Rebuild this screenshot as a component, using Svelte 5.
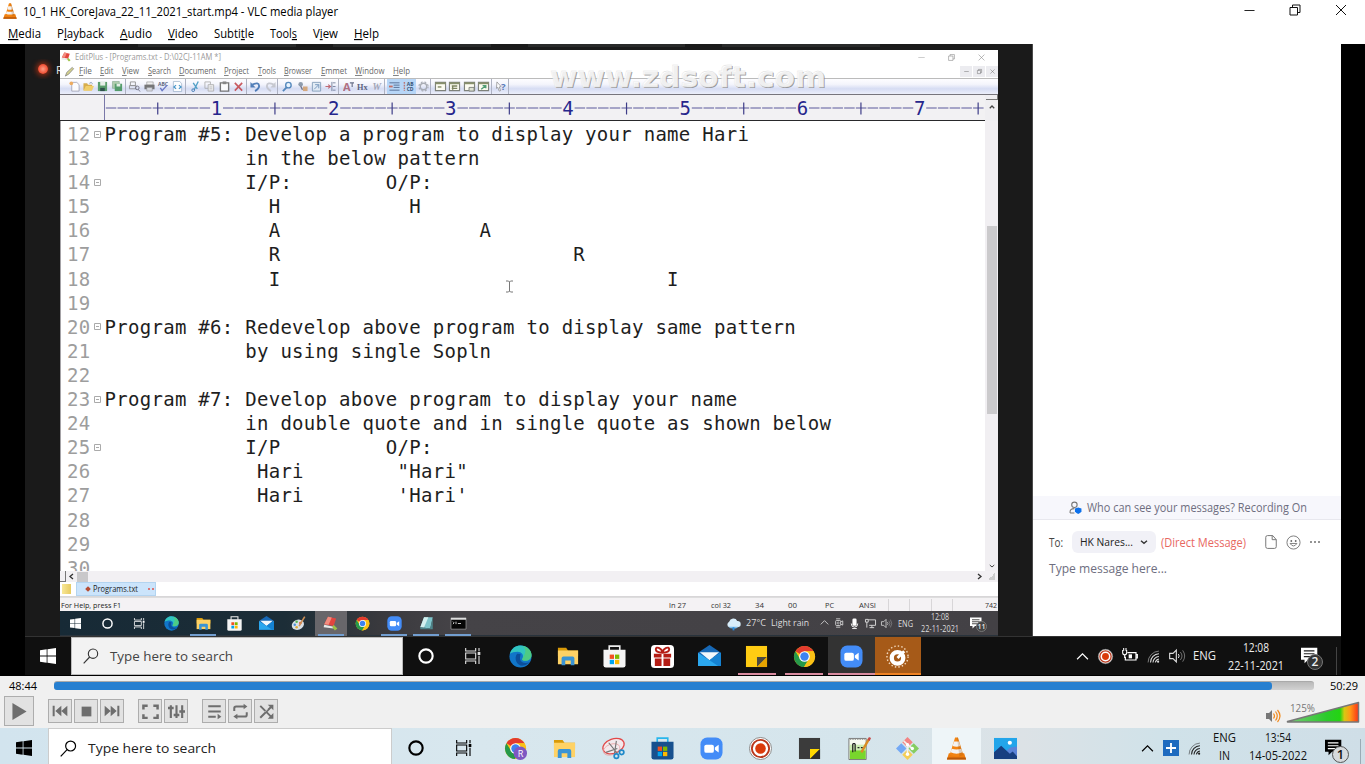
<script>
  const menus = [['', 'M', 'edia', 33], ['P', 'l', 'ayback', 47], ['', 'A', 'udio', 32], ['', 'V', 'ideo', 30], ['Subti', 't', 'le', 40], ['Tool', 's', '', 27], ['V', 'i', 'ew', 25], ['', 'H', 'elp', 25]];
  const editMenus = [['F', 'ile', 13], ['E', 'dit', 13.5], ['V', 'iew', 17], ['S', 'earch', 23], ['D', 'ocument', 37], ['P', 'roject', 25], ['T', 'ools', 18], ['B', 'rowser', 28], ['E', 'mmet', 26], ['W', 'indow', 29.5], ['H', 'elp', 17]];
  const lines = [
    'Program #5: Develop a program to display your name Hari',
    '            in the below pattern',
    '            I/P:        O/P:',
    '              H           H',
    '              A                 A',
    '              R                         R',
    '              I                                 I',
    '',
    'Program #6: Redevelop above program to display same pattern',
    '            by using single Sopln',
    '',
    'Program #7: Develop above program to display your name',
    '            in double quote and in single quote as shown below',
    '            I/P         O/P:',
    '             Hari        "Hari"',
    "             Hari        'Hari'",
    '', '', ''
  ];
  const folds = [0, 2, 8, 11, 13];
  const CW = 11.72;
  const ruler = Array.from({ length: 75 }, (_, i) => i + 1);
  const tools = [['new', 'open', 'save', 'saveall'], ['preview', 'print', 'spell', 'code'], ['cut', 'copy', 'paste', 'del'], ['undo', 'redo'], ['find', 'replace', 'goto', 'marker'], ['font', 'hx', 'wrap'], ['indent', 'nums', 'gear'], ['win1', 'win2', 'win3', 'win4'], ['help']];
  const innerApps = ['edge', 'folder', 'store', 'mail', 'paint', 'editplus', 'chrome', 'zoom', 'notepad', 'cmd'];
  const midApps = ['edge', 'folder', 'store', 'gift', 'mail', 'sticky', 'chrome', 'zoom', 'dial'];
  const apps = ['chromeR', 'folder', 'snip', 'store2', 'zoom', 'rec', 'sticky2', 'npp', 'git', 'cone', 'photos'];
  const status = [['ln 27', 547, 17], ['col 32', 25, 20], ['34', 24, 9], ['00', 24, 9], ['PC', 28, 9], ['ANSI', 25, 17]];
</script>

{#snippet t(s, w, size, fill = '#111', weight = 400)}
  <svg class="t" width={w} height={Math.ceil(size * 1.4)}><text x="0" y={size * 1.08} font-size={size} {fill} font-weight={weight} textLength={w} lengthAdjust="spacingAndGlyphs">{s}</text></svg>
{/snippet}

{#snippet mn(a, b, c, w, size, fill)}
  <svg class="t" width={w} height={Math.ceil(size * 1.5)}><text x="0" y={size * 1.08} font-size={size} {fill} textLength={w} lengthAdjust="spacingAndGlyphs">{a}<tspan text-decoration="underline">{b}</tspan>{c}</text></svg>
{/snippet}

{#snippet chromeArt()}
  <circle cx="12" cy="12" r="11" fill="#fbc116" />
  <path d="M12 12 2.500 6.500A11 11 0 0 1 21.500 6.500H12z" fill="#e33b2e" />
  <path d="M2.500 6.500A11 11 0 0 0 11.500 23L16.500 14.500 12 12 7.500 14.500z" fill="#26994a" />
  <path d="M21.500 6.500H12L16.800 14.500 11.500 23A11 11 0 0 0 21.500 6.500z" fill="#fbc116" />
  <circle cx="12" cy="12" r="5.600" fill="#fff" /><circle cx="12" cy="12" r="4.400" fill="#3d82f0" />
{/snippet}

{#snippet icon(name, size, color = '#fff')}
  <svg class="i" width={size} height={size} viewBox="0 0 24 24" fill="none">
    {#if name === 'cone'}
      <path d="M4 17h16l2 6.500H2z" fill="#ee7d0d" /><path d="M2.500 21.500h19l.5 2H2z" fill="#b9590a" /><path d="M10.500 .5h3L19 18.500q-7 3.500-14 0z" fill="#f28413" /><path d="M9.300 4.800h5.400l1.300 4.500q-4 1.500-8 0zM7 12.300q5 1.700 10 0l1.200 3.700q-6.200 2.800-12.400 0z" fill="#f3f3f3" /><path d="M13.500 .5 19 18.500q-2 1.200-4 1.500L12.500 .5z" fill="#8a4a12" opacity=".22" />
    {:else if name === 'win'}
      <path d="M0 3.300 10 2v9.400H0zM11.200 1.800 24 0v11.400H11.200zM0 12.600h10V22L0 20.700zM11.200 12.600H24V24l-12.800-1.800z" fill={color} />
    {:else if name === 'search'}
      <circle cx="15" cy="8.500" r="7" stroke={color} stroke-width="1.700" /><path d="M10 13.500 1 23" stroke={color} stroke-width="1.700" />
    {:else if name === 'cortana'}
      <circle cx="12" cy="12" r="10" stroke={color} stroke-width="3.200" />
    {:else if name === 'task'}
      <path d="M1 0v4.500h15V0M1 24v-4.500h15V24M1 7.500h15v9H1zM21 0v5M21 11.500V24" stroke={color} stroke-width="1.700" /><path d="M19 6h4v4.500h-4z" fill={color} />
    {:else if name === 'edge'}
      <circle cx="12" cy="12" r="11.500" fill="#1176c9" /><path d="M1 9C3 2.500 8 .4 12 .5c7 0 11.500 5 11.500 10 0 4-3 6-6.500 6-2.500 0-4-1-3-2.500 2-3.500-1-7-5-7-3.500 0-6.500 1-8 2z" fill="#31c5c0" /><path d="M14 1c6 1 9.500 5 9.500 9.500 0 4-3 6-6.500 6-2.500 0-4-1-3-2.500C17 10 19 4 14 1z" fill="#57cc70" opacity=".75" /><path d="M8.500 9c-4 5 0 13 6 12.500 3-.1 5-1.500 6.500-3.500-4 1.500-9 .5-9.500-3.500-.2-2 .5-3.500.5-5z" fill="#0b4f9c" />
    {:else if name === 'folder'}
      <path d="M1 3h9l2 3h11v6H1z" fill="#d99a08" /><path d="M1 6h22v15H1z" fill="#ffd265" /><path d="M5 22v-7.500q0-2 2-2h10q2 0 2 2V22h-4v-5H9v5z" fill="#3b94d4" />
    {:else if name === 'store' || name === 'store2'}
      {@const d = name === 'store2'}
      <path d="M6.500 6V1.200h11V6" stroke={d ? '#28b6ec' : '#eee'} stroke-width="1.700" /><path d="M.5 5h23v16q0 2.500-2.500 2.500H3Q.5 23.500.5 21z" fill={d ? '#17508e' : '#f5f5f5'} /><path d="M7 10h4.500v4.500H7z" fill="#f25022" /><path d="M12.500 10H17v4.500h-4.500z" fill="#7fba00" /><path d="M7 15.500h4.500V20H7z" fill="#00a4ef" /><path d="M12.500 15.500H17V20h-4.500z" fill="#ffb900" />
    {:else if name === 'mail'}
      <path d="M0 8 12 0l12 8v14H0z" fill="#1768b5" /><path d="M2 7.500h20L12 16z" fill="#f2f8fc" /><path d="M0 8l12 8 12-8v14H0z" fill="#2ba7ee" /><path d="M24 8 12 16l9 6h3z" fill="#1582d2" />
    {:else if name === 'gift'}
      <rect width="24" height="24" rx="4" fill="#fff" /><path d="M3 9h8v4H3zM13 9h8v4h-8zM4 14h7v8H4zM13 14h7v8h-7z" fill="#b51d15" /><path d="M12 8C9 8 5 7 5 4.500 5 1 11 3 12 8c1-5 7-7 7-3.500C19 7 15 8 12 8z" stroke="#b51d15" stroke-width="2" />
    {:else if name === 'sticky' || name === 'sticky2'}
      {@const d = name === 'sticky2'}
      <path d="M1 1h22v22H1z" fill={d ? '#3b3b3b' : '#ffcc13'} /><path d="M12.500 23V12.500H23z" fill={d ? '#ffd900' : '#4d4a40'} /><path d="M23 12.500V23H12.500z" fill={d ? '#2d2d2d' : '#e7a400'} />
    {:else if name === 'chrome'}
      {@render chromeArt()}
    {:else if name === 'chromeR'}
      {@render chromeArt()}<circle cx="17" cy="17" r="7" fill="#7e57c2" /><text x="14.300" y="20.500" font-size="9.500" fill="#fff">R</text>
    {:else if name === 'zoom'}
      <rect x=".5" y=".5" width="23" height="23" rx="7" fill="#438cf7" /><rect x="4.500" y="8" width="10" height="8.500" rx="2" fill="#fff" /><path d="m15.500 11 4-2.800v8l-4-2.800z" fill="#fff" />
    {:else if name === 'dial'}
      <circle cx="12" cy="12" r="11" stroke="#f3d9bd" stroke-width="1.500" stroke-dasharray="1.500 2.200" /><circle cx="12" cy="13.500" r="6" stroke="#fff" stroke-width="4.500" /><path d="m12 13.500 7-7" stroke="#fff" stroke-width="3" />
    {:else if name === 'snip'}
      <ellipse cx="12" cy="9.500" rx="11.500" ry="7.500" transform="rotate(-20 12 9.500)" fill="#f3e9ec" stroke="#e24848" stroke-width="1.300" /><ellipse cx="10" cy="13" rx="9" ry="5.500" transform="rotate(-20 10 13)" stroke="#e99a9a" stroke-width=".7" /><path d="m7 6 9 11M15 4l-2 13M4 16l12-4" stroke="#777" stroke-width="1.200" /><circle cx="15" cy="20" r="2.300" stroke="#1e89c9" stroke-width="1.800" /><circle cx="20.500" cy="16" r="2.300" stroke="#1e89c9" stroke-width="1.800" />
    {:else if name === 'rec'}
      <circle cx="12" cy="12" r="11.500" fill="#fff" stroke="#888" stroke-width="1" /><circle cx="12" cy="12" r="9" stroke="#b9371b" stroke-width="2" /><circle cx="12" cy="12" r="5.500" fill="#da3b0b" />
    {:else if name === 'npp'}
      <path d="M2 1.500h18v22H2z" fill="#f7fbf2" stroke="#777" /><path d="M3 9h16.500v14H3z" fill="#78d62d" /><path d="M3 8h16.500v6H3z" fill="#cdeeb4" /><path d="M3 2h16" stroke="#888" stroke-width="1.500" stroke-dasharray="1.500 1" /><path d="M6 7v9M8.500 7v8M6 7h2.500M11 11h2M14.500 11h2" stroke="#222" stroke-width="1.300" /><path d="m23 2-8 14" stroke="#d98d25" stroke-width="2.500" /><path d="m24 .5-1.500 3" stroke="#c54848" stroke-width="2.500" />
    {:else if name === 'git'}
      <path d="m12 0 5.500 5.500L12 11 6.500 5.500z" fill="#f38484" /><path d="m18.500 6.500 5.500 5.500-5.500 5.500L13 12z" fill="#86cd61" /><path d="m5.500 6.500L0 12l5.500 5.500L11 12z" fill="#74a9f5" /><path d="m12 13 5.500 5.500L12 24l-5.500-5.500z" fill="#f5ce57" /><path d="m8 4 4 4v11M12 8l5 4" stroke="#f1f1ed" stroke-width="1.700" /><circle cx="12" cy="18" r="1.800" fill="#fff" /><circle cx="17" cy="12" r="1.800" fill="#fff" /><circle cx="12" cy="8" r="1.800" fill="#fff" />
    {:else if name === 'photos'}
      <path d="M0 1h24v22H0z" fill="#22a5ea" /><path d="M24 10v13h-8l-4-8 5-4z" fill="#5a83d8" /><path d="m0 16 7.500-7 9 8.500 3-2.500 4.500 5v3H0z" fill="#173f80" /><circle cx="16.500" cy="6" r="2.200" fill="#fff" />
    {:else if name === 'paint'}
      <ellipse cx="11" cy="14" rx="10" ry="8" fill="#d8dfe5" transform="rotate(-20 11 14)" /><circle cx="6" cy="14" r="2" fill="#4b90d8" /><circle cx="9" cy="9" r="2" fill="#59b655" /><circle cx="15" cy="11" r="2" fill="#d84f3b" /><circle cx="9" cy="18" r="2" fill="#e0ac3a" /><path d="m22 1-9 15" stroke="#cf9056" stroke-width="2.500" />
    {:else if name === 'editplus'}
      <path d="M8 1 21 4l-4 12L2 13z" fill="#e3453f" /><path d="m8 1 6 1.500L9 14 2 13z" fill="#f28d80" /><path d="M2 14l15 3v3L1 18z" fill="#e8eaea" /><path d="m17 14 6 6-4 3-4-5z" fill="#9dc144" />
    {:else if name === 'notepad'}
      <path d="M8 2h14l-4 18-16-2z" fill="#7fc5cb" /><path d="m8 2 7 0-7 16.500-6-.5z" fill="#d4f0ef" /><path d="m2 18 16 2 4-18v19H2z" fill="#4d858b" />
    {:else if name === 'cmd'}
      <path d="M0 3h24v18H0z" fill="#060606" stroke="#aaa" /><path d="M0 3h24v3H0z" fill="#ddd" /><path d="m3 9 2 2-2 2M8 9v4M11 12h5" stroke="#eee" stroke-width="1.300" />
    {:else if name === 'chev'}
      <path d="m2 17 10-10 10 10" stroke={color} stroke-width="2.200" />
    {:else if name === 'chevb'}
      <path d="m3 17 9-9 9 9" stroke={color} stroke-width="5" />
    {:else if name === 'chevd'}
      <path d="m3 8 9 8 9-8" stroke={color} stroke-width="4" />
    {:else if name === 'wifi'}
      <path d="M2 23A21 21 0 0 1 22 2" stroke={color} stroke-width="1.500" opacity=".65" /><path d="M6.500 23A16 16 0 0 1 22 7M11 23a11.500 11.500 0 0 1 11-11M15.500 23q1-5.500 6.500-6.500" stroke={color} stroke-width="2" /><circle cx="20.500" cy="21.500" r="2" fill={color} />
    {:else if name === 'vol'}
      <path d="M1 8h5l5-5v18l-5-5H1z" stroke={color} stroke-width="1.700" /><path d="M14 9q2.500 3 0 6" stroke={color} stroke-width="1.500" /><path d="M17 6q5 6 0 12M20.500 3.500q6 8.500 0 17" stroke={color} stroke-width="1.300" opacity=".55" />
    {:else if name === 'batt'}
      <path d="M8 7h13v11H5v-5M21 10h2v5h-2" stroke={color} stroke-width="1.800" /><path d="M10 9.500h5v6h-5z" fill={color} /><path d="M1 3v4q0 3 3 3t3-3V3M2.500 0v4M6 0v4M4 10v5" stroke={color} stroke-width="1.600" />
    {:else if name === 'cam'}
      <rect x="4" y="6" width="12" height="12" rx="2" stroke={color} stroke-width="2" /><circle cx="10" cy="12" r="2.500" stroke={color} stroke-width="1.500" /><path d="M16 9l5-2v10l-5-2M5 2h10M5 22h10" stroke={color} stroke-width="2" />
    {:else if name === 'mic'}
      <rect x="7.500" y="1" width="9" height="16" rx="3" fill={color} /><path d="M5 12q0 8 7 8t7-8M7 23h10" stroke={color} stroke-width="2" />
    {:else if name === 'net'}
      <path d="M7 4h16v12H9M15 16v5M10 21h10M1 3h6v6H1zM4 9v12" stroke={color} stroke-width="2" />
    {:else if name === 'cloud'}
      <path d="M5 18a5 5 0 0 1 0-9 7 7 0 0 1 13-1 5 5 0 0 1 1 10z" fill="#d8edfa" /><path d="M4 17h15q-1 3-7 3t-8-3z" fill="#7bbbe8" /><path d="M12 18v5" stroke="#2889db" stroke-width="3" />
    {:else if name === 'notif'}
      <path d="M0 1h23v17H10l-5 5v-5H0z" fill={color} /><path d="M4 5.500h15M4 9.500h15M4 13.500h15" stroke={color === '#000' ? '#fff' : '#222'} stroke-width="1.600" />
    {:else if name === 'plus'}
      <path d="M0 0h24v24H0z" fill="#1e6bbf" /><path d="M12 4.500v15M4.500 12h15" stroke="#fff" stroke-width="2.800" />
    {:else if name === 'min'}
      <path d="M1 12h22" stroke={color} stroke-width="2" />
    {:else if name === 'restore'}
      <path d="M2 7h15v15H2zM7 7V2h15v15h-5" stroke={color} stroke-width="2" />
    {:else if name === 'close'}
      <path d="m2 2 20 20M22 2 2 22" stroke={color} stroke-width="2" />
    {:else if name === 'play'}
      <path d="M2 0 22 12 2 24z" fill={color} />
    {:else if name === 'prev'}
      <path d="M1 4h3v16H1zM14 4v16L5 12zM23 4v16l-9-8z" fill={color} />
    {:else if name === 'next'}
      <path d="M20 4h3v16h-3zM10 4v16l9-8zM1 4v16l9-8z" fill={color} />
    {:else if name === 'stop'}
      <path d="M3 3h18v18H3z" fill={color} />
    {:else if name === 'full'}
      <path d="M2 9V4h6M16 4h6v5M22 16v5h-6M8 21H2v-5" stroke={color} stroke-width="3.500" />
    {:else if name === 'eq'}
      <path d="M4 3v18M12 3v18M20 3v18" stroke={color} stroke-width="3" /><path d="M0 7h8M8 17h8M16 12h8" stroke={color} stroke-width="3.500" />
    {:else if name === 'list'}
      <path d="M2 3.500h20M2 12h20M2 20.500h12" stroke={color} stroke-width="3.300" /><path d="m17 15.500 6 5-6 4z" fill={color} />
    {:else if name === 'loop'}
      <path d="M2 11V7q0-3 3-3h13M22 13v4q0 3-3 3H6" stroke={color} stroke-width="3.200" /><path d="m17-.5 6 4.500-6 4.500zM7 15.500.500 20 7 24.500z" fill={color} />
    {:else if name === 'shuffle'}
      <path d="m2 3 18 18M2 22 20 4" stroke={color} stroke-width="3.200" /><path d="M14 1h9v9zM14 23.500h9v-9z" fill={color} /><path d="m9 13 5-5" stroke="#e2e2e2" stroke-width="1" />
    {:else if name === 'person'}
      <circle cx="10" cy="7" r="5" stroke="#777" stroke-width="2" /><path d="M2 22q-1-8 8-8M2 22h8" stroke="#777" stroke-width="2" /><path d="m17 12 6 2v5q-1 3-6 5-5-2-6-5v-5z" fill="#0e71eb" />
    {:else if name === 'file'}
      <path d="M6 1h9l6 7v12q0 3-3 3H6q-3 0-3-3V4q0-3 3-3zM14 1v7h7" stroke="#777" stroke-width="1.700" />
    {:else if name === 'smile'}
      <circle cx="12" cy="12" r="10.500" stroke="#777" stroke-width="1.500" /><circle cx="8.500" cy="9.500" r="1.500" fill="#666" /><circle cx="15.500" cy="9.500" r="1.500" fill="#666" /><path d="M6.500 13.500q5.500 8 11 0z" stroke="#777" stroke-width="1.500" />
    {:else if name === 'dots'}
      <circle cx="4" cy="12" r="1.900" fill="#666" /><circle cx="12" cy="12" r="1.900" fill="#666" /><circle cx="20" cy="12" r="1.900" fill="#666" />
    {:else if name === 'pen'}
      <path d="m3 22 3-8L18 3l3 3L10 18z" fill="#d5d28c" stroke="#777" stroke-width="1.500" />
    {:else if name === 'new'}
      <path d="M6 3h11l5 5v14H6z" fill="#fff" stroke="#889" stroke-width="1.500" /><circle cx="5" cy="5" r="4" fill="#eda24b" />
    {:else if name === 'open'}
      <path d="M1 5h8l2 3h9v12H1z" fill="#d5a536" /><path d="M6 11h18l-5 10H1z" fill="#f4cc57" /><path d="M14 5q4-4 7 1" stroke="#6b87a8" stroke-width="2" />
    {:else if name === 'save'}
      <path d="M2 2h20v20H2z" fill="#48945a" /><path d="M7 2h11v8H7z" fill="#e4eee6" /><path d="M7 15h10v7H7z" fill="#173f35" />
    {:else if name === 'saveall'}
      <path d="M1 1h15v15H1z" fill="#a7c8a4" stroke="#5b8b67" /><path d="M6 6h16v16H6z" fill="#42935a" /><path d="M10 6h8v6h-8z" fill="#e1eee3" />
    {:else if name === 'preview'}
      <path d="M3 2h11v8H3zM1 10h14v7H1z" stroke="#888" stroke-width="2" /><circle cx="18" cy="15" r="4" stroke="#667" stroke-width="2" /><path d="m20 18 4 5" stroke="#667" stroke-width="2" />
    {:else if name === 'print'}
      <path d="M6 2h14v7H6z" fill="#eee" stroke="#666" /><path d="M1 8h22v10H1z" fill="#666" /><path d="M6 14h12v8H6z" fill="#d5d7dc" stroke="#777" />
    {:else if name === 'spell'}
      <text x="0" y="10" font-size="11" fill="#4b5270" font-weight="700">ABC</text><path d="m5 15 4 6L20 9" stroke="#5969c0" stroke-width="3" />
    {:else if name === 'code'}
      <path d="M3 1h14l4 5v17H3z" fill="#fff" stroke="#8ca4c0" stroke-width="1.500" /><path d="m9 9-5 4 5 4M15 9l5 4-5 4" stroke="#328bc5" stroke-width="2.500" />
    {:else if name === 'cut'}
      <path d="m18 1-9 18M7 4l9 13" stroke="#3e96c1" stroke-width="3" /><circle cx="7" cy="20" r="3" stroke="#2b6cac" stroke-width="2" />
    {:else if name === 'copy'}
      <path d="M2 2h12v14H2z" stroke="#aaa" stroke-width="2" /><path d="M9 8h12v14H9z" fill="#eee" stroke="#aaa" stroke-width="2" /><path d="M12 13h6M12 17h6" stroke="#aaa" stroke-width="1.500" />
    {:else if name === 'paste'}
      <path d="M3 4h18v18H3z" fill="#fff" stroke="#666" stroke-width="3" /><path d="M8 1h8v6H8z" fill="#777" />
    {:else if name === 'del'}
      <path d="m4 4 16 17M20 4 4 21" stroke="#c3454b" stroke-width="3.500" />
    {:else if name === 'undo'}
      <path d="M5 8q14-7 15 3 0 6-9 11" stroke="#3d6fb0" stroke-width="4" /><path d="M1 2v12h11z" fill="#3d6fb0" />
    {:else if name === 'redo'}
      <path d="M19 8Q5 1 4 11q0 6 9 11" stroke="#c1c3cb" stroke-width="4" /><path d="M23 2v12H12z" fill="#c1c3cb" />
    {:else if name === 'find'}
      <circle cx="14" cy="9" r="6" fill="#e8f4ff" stroke="#427cb6" stroke-width="3" /><path d="m10 14-8 8" stroke="#427cb6" stroke-width="4" />
    {:else if name === 'replace'}
      <circle cx="8" cy="7" r="5" fill="#8090a4" /><path d="m8 11 4 8" stroke="#667" stroke-width="3" /><path d="M13 12h10v10H13z" fill="#d3a16f" />
    {:else if name === 'goto'}
      <path d="M3 3h18v19H3z" fill="#e1ebf5" stroke="#7895b2" stroke-width="2" /><path d="m7 18 10-10M9 8h8v8" stroke="#6388b3" stroke-width="2" />
    {:else if name === 'marker'}
      <path d="M1 12h10M7 8l5 4-5 4" stroke="#bb5962" stroke-width="2.500" /><path d="M15 2v20M17 4h6M17 12h6M17 20h6" stroke="#687493" stroke-width="2" />
    {:else if name === 'font'}
      <text x="0" y="22" font-size="24" fill="#a95f72" font-weight="700">A</text><path d="M15 4h9M20 4v9" stroke="#565d7b" stroke-width="2.500" />
    {:else if name === 'hx'}
      <text class="serif" x="0" y="20" font-size="18" fill="#4c5270" font-weight="700">Hx</text>
    {:else if name === 'wrap'}
      <text class="serif" x="1" y="20" font-size="21" fill="#999cae" font-style="italic" font-weight="700">W</text>
    {:else if name === 'indent'}
      <path d="M1 4h22M10 9h13M10 14h13M1 20h22" stroke="#465e86" stroke-width="2" /><path d="M0 12h8" stroke="#ca6050" stroke-width="4" />
    {:else if name === 'nums'}
      <text x="8" y="11" font-size="11" fill="#263e63" font-weight="700">AB</text><text x="8" y="22" font-size="11" fill="#263e63" font-weight="700">CD</text><path d="M3 2v20" stroke="#bd6a65" stroke-width="3" stroke-dasharray="4 2" />
    {:else if name === 'gear'}
      <circle cx="12" cy="12" r="7" stroke="#a0a4ac" stroke-width="3" /><circle cx="12" cy="12" r="10" stroke="#a0a4ac" stroke-width="2.500" stroke-dasharray="4 4" />
    {:else if name.startsWith('win')}
      <path d="M1 3h22v18H1z" fill="#fffef0" stroke="#72756b" stroke-width="2.500" /><path d="M1 3h22v4H1z" fill="#788358" />
      {#if name === 'win1'}<path d="M6 13h8" stroke="#70784d" stroke-width="3" />{:else if name === 'win2'}<path d="M8 9v10M6 11h12M6 16h12" stroke="#70784d" stroke-width="3" />{:else if name === 'win3'}<path d="M11 14h11v8H11z" fill="#dfe3cf" stroke="#72756b" stroke-width="2" />{:else}<path d="m7 18 9-7M10 10h7v6" stroke="#3d9362" stroke-width="3" />{/if}
    {:else if name === 'help'}
      <path d="m2 2 9 10-4 1 3 8-3 1-3-8-3 2z" fill="#fff" stroke="#777" stroke-width="1.500" /><text x="11" y="20" font-size="21" fill="#4069b0" font-weight="700">?</text>
    {/if}
  </svg>
{/snippet}

<div class="screen">
  <div class="title">
    {@render icon('cone', 16)}
    {@render t('10_1 HK_CoreJava_22_11_2021_start.mp4 - VLC media player', 315, 12, '#000')}
    <div class="winbtns">{@render icon('min', 11, '#111')}{@render icon('restore', 12, '#111')}{@render icon('close', 12, '#111')}</div>
  </div>
  <div class="menu">{#each menus as m}{@render mn(m[0], m[1], m[2], m[3], 12, '#000')}{/each}</div>

  <div class="video">
    <div class="frame">
      <div class="meeting">
        <div class="dark left"><i class="dot"></i><span>R</span></div>
        <div class="share">
          <div class="strip"><i></i><i></i><i></i><i></i></div>
          <div class="window">
            <div class="etitle">{@render icon('editplus', 10)}{@render t('EditPlus - [Programs.txt - D:\\02CJ-11AM *]', 146, 8.3, '#999')}
              <div class="ebtns">{@render icon('min', 7, '#aaa')}{@render icon('restore', 7, '#888')}{@render icon('close', 7, '#888')}</div></div>
            <div class="emenu">{@render icon('pen', 11)}<div class="eitems">{#each editMenus as m}{@render mn('', m[0], m[1], m[2], 8.3, '#666')}{/each}</div>
              <div class="mdi"><b>{@render icon('min', 5, '#555')}</b><b>{@render icon('restore', 5, '#555')}</b><b>{@render icon('close', 5, '#555')}</b></div></div>
            <div class="tools">{#each tools as g}<div class="group">{#each g as n}<span class:on={n === 'indent' || n === 'nums'}>{@render icon(n, 11)}</span>{/each}</div>{/each}</div>
            <div class="ruler">
              <svg width="925" height="25">
                <path d="M44.500 0v25" stroke="#7a78a8" />
                {#each ruler as n}
                  {@const x = 45 + (n - 1) * CW}
                  {#if n % 10 === 0}<text class="mono" x={x + 0.2} y="19.500" font-size="19" fill="#26268c">{n / 10}</text>
                  {:else}<path d="M{x + 0.8} 13H{x + CW - 0.4}" stroke="#5a599b" />{#if n % 5 === 0}<path d="M{x + CW / 2} 7.500v12" stroke="#3e3d88" stroke-width="1.200" />{/if}{/if}
                {/each}
              </svg>
              <div class="rcorner"><i></i>{@render icon('chevb', 6, '#444')}</div>
            </div>
            <div class="editor">
              <div class="lines">
                {#each lines as l, i}<div class="line"><span class="num">{i + 12}</span><span class="fold">{#if folds.includes(i)}<svg width="7" height="7"><path d="M.5.500h6v6h-6zM2 3.500h3" fill="none" stroke="#aaa" /></svg>{/if}</span><span class="code">{l}</span></div>{/each}
              </div>
              <div class="vbar"><div class="thumb"></div>{@render icon('chevd', 6, '#444')}</div>
              <svg class="caret" width="9" height="13" viewBox="0 0 9 13"><path d="M1 1h2.500l1 1 1-1H8M1 12h2.500l1-1 1 1H8M4.500 2v9" fill="none" stroke="#777" /></svg>
            </div>
            <div class="hbar"><i class="split"></i><svg width="6" height="7" viewBox="0 0 6 7"><path d="M5 1 2 3.500 5 6" fill="none" stroke="#333" stroke-width="1.300" /></svg><i class="hthumb"></i><svg class="rt" width="6" height="7" viewBox="0 0 6 7"><path d="M1 1 4 3.500 1 6" fill="none" stroke="#333" stroke-width="1.300" /></svg><i class="grip"></i></div>
            <div class="tabs"><i class="fold2"></i><div class="tab"><i class="dia"></i>{@render t('Programs.txt', 45, 8.3, '#222')}<i class="tdots"></i></div></div>
            <div class="status">{@render t('For Help, press F1', 60, 8, '#222')}{#each status as s, i}<span style:margin-left="{i === 0 ? 548 : s[1]}px">{@render t(s[0], s[2], 8, '#333')}</span>{/each}<i class="cells"></i>{@render t('742', 12, 8, '#333')}</div>
            <div class="itask">
              <div class="icells"><span>{@render icon('win', 11)}</span><span>{@render icon('cortana', 11)}</span><span>{@render icon('task', 11)}</span>{#each innerApps as a}<span class={a} class:open={['folder', 'zoom', 'notepad', 'cmd'].includes(a)}>{@render icon(a, 15)}</span>{/each}</div>
              <div class="itray">{@render icon('cloud', 15)}{@render t('27°C', 20, 9.5, '#ddd')}{@render t('Light rain', 38, 9.5, '#ddd')}
                <div class="ismall">{@render icon('chev', 9, '#ddd')}{@render icon('cam', 10, '#ddd')}{@render icon('mic', 11)}{@render icon('net', 11, '#ddd')}{@render icon('vol', 11, '#ddd')}</div>{@render t('ENG', 15, 9, '#ddd')}
                <div class="clock ic">{@render t('12:08', 18, 8.5, '#ddd')}{@render t('22-11-2021', 38, 8.3, '#ddd')}</div>
                <div class="nt">{@render icon('notif', 12)}<b class="bi">11</b></div></div>
            </div>
          </div>
          <div class="watermark"><svg width="282" height="32"><text class="wms" x="2" y="24" textLength="276" lengthAdjust="spacingAndGlyphs">www.zdsoft.com</text><text class="wm" x="1" y="23" textLength="276" lengthAdjust="spacingAndGlyphs">www.zdsoft.com</text></svg></div>
        </div>
        <div class="dark right"></div>
        <div class="chat">
          <div class="banner">{@render icon('person', 13)}{@render t('Who can see your messages? Recording On', 220, 12, '#6e6e80')}</div>
          <div class="to">{@render t('To:', 14, 12, '#444')}<div class="pill">{@render t('HK Nares...', 53, 11.5, '#222')}{@render icon('chevd', 8, '#333')}</div>{@render t('(Direct Message)', 85, 12, '#e8685f')}<div class="ci">{@render icon('file', 14)}{@render icon('smile', 15)}{@render icon('dots', 12)}</div></div>
          <div class="type">{@render t('Type message here...', 118, 12.8, '#6e6e80')}</div>
        </div>
      </div>
      <div class="mtask">
        <div class="start">{@render icon('win', 16)}</div>
        <div class="search">{@render icon('search', 16, '#333')}{@render t('Type here to search', 123, 13.3, '#444')}</div>
        <div class="mcells"><span>{@render icon('cortana', 16)}</span><span>{@render icon('task', 16, '#ddd')}</span>{#each midApps as a}<span class={a}>{@render icon(a, a === 'folder' ? 22 : 23)}</span>{/each}</div>
        <div class="mtray">{@render icon('chev', 13)}{@render icon('rec', 15)}{@render icon('batt', 16)}{@render icon('wifi', 13, '#ddd')}{@render icon('vol', 16, '#ddd')}</div>
        <div class="meng">{@render t('ENG', 23, 12.4, '#eee')}</div>
        <div class="clock mc">{@render t('12:08', 26, 12.3, '#eee')}{@render t('22-11-2021', 56, 12, '#eee')}</div>
        <div class="nt mnt">{@render icon('notif', 17)}<b class="bm">2</b></div>
      </div>
    </div>
  </div>

  <div class="controls">
    <div class="seek">{@render t('48:44', 28, 11, '#000')}<div class="track"><div class="fill"></div></div>{@render t('50:29', 28, 11, '#000')}</div>
    <div class="buttons">
      <div class="btn big">{@render icon('play', 17, '#6e6e6e')}</div>
      <div class="bg">{#each ['prev', 'stop', 'next'] as b}<div class="btn">{@render icon(b, b === 'stop' ? 13 : 16, '#6e6e6e')}</div>{/each}</div>
      <div class="bg">{#each ['full', 'eq'] as b}<div class="btn">{@render icon(b, 17, '#6e6e6e')}</div>{/each}</div>
      <div class="bg">{#each ['list', 'loop', 'shuffle'] as b}<div class="btn">{@render icon(b, 15, '#6e6e6e')}</div>{/each}</div>
      <svg class="volume" width="96" height="26" viewBox="0 0 96 26">
        <defs><linearGradient id="vg"><stop offset="0" stop-color="#79c879" /><stop offset=".55" stop-color="#2bcb2b" /><stop offset=".74" stop-color="#24d412" /><stop offset=".8" stop-color="#d7c812" /><stop offset=".88" stop-color="#ff9b16" /><stop offset="1" stop-color="#fb3116" /></linearGradient></defs>
        <path d="M1 15h3l3-3v12l-3-3H1z" fill="#777" /><path d="M8.500 15.500q2 2.500 0 5M10.500 13.500q3.500 4.500 0 9M12.500 12q5 6 0 12" fill="none" stroke="#f28a1c" stroke-width="1.200" />
        <path d="M22.500 23.500 93.500 4.500v19.500H22.500z" fill="url(#vg)" stroke="#777" stroke-width="1.500" stroke-linejoin="round" />
        <text x="25" y="14" font-size="10" fill="#777" textLength="25" lengthAdjust="spacingAndGlyphs">125%</text>
      </svg>
    </div>
  </div>

  <div class="taskbar">
    <div class="start b">{@render icon('win', 16, '#000')}</div>
    <div class="search s2">{@render icon('search', 17, '#000')}{@render t('Type here to search', 128, 13.3, '#222')}</div>
    <div class="lead"><span>{@render icon('cortana', 16, '#000')}</span><span>{@render icon('task', 16, '#000')}</span></div>
    <div class="bcells">{#each apps as a}<span class={a}>{@render icon(a, 23)}</span>{/each}</div>
    <div class="btray">{@render icon('chev', 13, '#000')}{@render icon('plus', 16)}{@render icon('wifi', 13, '#222')}</div>
    <div class="clock lang">{@render t('ENG', 23, 12.3, '#111')}{@render t('IN', 11, 12.3, '#111')}</div>
    <div class="clock bc">{@render t('13:54', 26, 12.3, '#111')}{@render t('14-05-2022', 58, 12.3, '#111')}</div>
    <div class="nt bnt">{@render icon('notif', 17, '#000')}<b class="bb">1</b></div>
  </div>
</div>

<style>
  :global(body) { background: #000; overflow: hidden; }
  .screen { width: 1365px; height: 764px; display: flex; flex-direction: column; overflow: hidden; font-family: "Open Sans", "Noto Sans", sans-serif; background: #fff; }
  .screen * { box-sizing: border-box; }
  svg { display: block; flex: none; }
  .t { overflow: visible; }
  .i { overflow: visible; }
  .mono { font-family: "DejaVu Sans Mono", monospace; }
  .serif { font-family: "Liberation Serif", serif; }
  .title { height: 24px; display: flex; align-items: center; padding: 0 18px 2px 2px; gap: 5px; }
  .winbtns { margin-left: auto; display: flex; gap: 34px; align-items: center; padding-bottom: 2px; }
  .menu { height: 20px; display: flex; gap: 16px; padding-left: 8px; align-items: center; padding-bottom: 1px; }
  .video { height: 632px; background: #000; padding: 0 24px 1px 25px; }
  .frame { height: 631px; background: #1a1a1a; display: flex; flex-direction: column; }
  .meeting { height: 592px; display: flex; }
  .dark { width: 35px; flex: none; }
  .dark.right { border-right: 1px solid #4a4a4a; }
  .left { display: flex; justify-content: flex-end; align-items: center; height: 20px; margin-top: 15px; color: #eee; font-size: 11px; overflow: hidden; gap: 8px; }
  .left span { width: 4px; overflow: hidden; }
  .dot { width: 10px; height: 10px; border-radius: 50%; background: radial-gradient(#ff9d86, #f04a2e 70%); box-shadow: 0 0 5px 2px #8a2b14; }
  .share { width: 938px; flex: none; display: flex; flex-direction: column; position: relative; }
  .strip { height: 6px; display: flex; gap: 37px; padding: 0 118px 3px 78px; background: #1a1a1a; }
  .strip i { flex: 1; background: #292a2a; }
  .window { background: #fff; height: 586px; display: flex; flex-direction: column; overflow: hidden; }
  .etitle { height: 14px; display: flex; align-items: center; gap: 3.5px; padding: 0 13px 0 1px; }
  .ebtns { margin-left: auto; display: flex; gap: 23px; }
  .emenu { height: 14px; display: flex; align-items: center; padding-left: 4px; }
  .eitems { display: flex; gap: 8.4px; margin-left: 4px; padding-top: 1px; }
  .mdi { margin-left: auto; display: flex; gap: 1px; }
  .mdi b { width: 12px; height: 11px; background: #ececf0; display: grid; place-items: center; }
  .tools { height: 17px; flex: none; border-top: 1px solid #bbb; border-bottom: 1px solid #77757c; background: linear-gradient(#fdfdff, #f4f5fc 35%, #d6dcf3 65%, #eceffa); display: flex; padding-left: 6px; }
  .group { display: flex; border-right: 1px solid #aeb2c2; margin-right: 1px; padding: 0 0 0 1px; }
  .group span { width: 14.4px; height: 15px; display: grid; place-items: center; }
  .group span.on { background: #b7d6f7; }
  .group .i { opacity: .88; }
  .ruler { height: 26px; flex: none; background: #f2f1f3; border-bottom: 1px solid #29292b; display: flex; }
  .rcorner { width: 13px; background: #efeef1; display: flex; flex-direction: column; align-items: center; gap: 4px; height: 26px; }
  .rcorner i { width: 12px; height: 5px; border-right: 1px solid #777; border-bottom: 1px solid #777; }
  .editor { height: 450px; flex: none; display: flex; position: relative; border-left: 1px solid #a4a2a6; overflow: hidden; }
  .lines { width: 924px; padding-top: 1px; font: 19px "DejaVu Sans Mono", monospace; letter-spacing: .28px; }
  .line { height: 24.1px; line-height: 24.1px; display: flex; white-space: pre; color: #1e1e1e; }
  .num { width: 32px; padding-left: 6px; color: #9d9d9d; }
  .fold { width: 11.6px; display: flex; align-items: center; padding-left: 1px; }
  .vbar { width: 13px; background: #f1eff2; padding-top: 105px; display: flex; flex-direction: column; align-items: center; justify-content: space-between; padding-bottom: 2px; }
  .thumb { width: 10px; height: 188px; background: #cbcacc; }
  .caret { position: absolute; left: 444px; top: 159px; }
  .hbar { height: 11px; flex: none; background: #f2f0f3; display: flex; align-items: center; }
  .split { width: 6px; height: 11px; border-right: 1px solid #777; border-bottom: 1px solid #777; margin-right: 2px; }
  .hthumb { width: 11px; height: 10px; background: #c9c8ca; margin-left: 3px; }
  .rt { margin-left: auto; }
  .grip { width: 7px; height: 7px; margin: 0 3px 0 5px; background: linear-gradient(135deg, transparent 50%, #ccc 50%); }
  .tabs { height: 15px; flex: none; display: flex; border-bottom: 1px solid #d8d6d8; padding-left: 2px; gap: 5px; align-items: center; }
  .fold2 { width: 9px; height: 10px; background: linear-gradient(90deg, #f8e796, #e7cb61); }
  .tab { width: 80px; height: 14px; background: #cbe4fb; border: 1px solid #b3d4f0; display: flex; align-items: center; padding-left: 9px; gap: 3px; }
  .dia { width: 4px; height: 4px; background: #b64b32; transform: rotate(45deg); }
  .tdots { width: 6px; margin-left: 7px; border-bottom: 2px dotted #d97777; }
  .status { height: 14px; flex: none; background: #f4f2f4; border-top: 1px solid #ddd; display: flex; align-items: center; padding-left: 1px; }
  .cells { width: 66px; height: 12px; margin: 0 31px 0 12px; background: repeating-linear-gradient(90deg, #d8d6d8 0 1px, transparent 1px 21.500px); }
  .itask { height: 25px; flex: none; background: linear-gradient(90deg, #172a36, #1c2d37 24%, #39393d 34%, #454347 42%, #434145); display: flex; justify-content: space-between; border-bottom: 1px solid #29333c; }
  .icells { display: flex; margin-left: -.5px; }
  .icells span { width: 31.9px; height: 25px; display: grid; place-items: center; }
  .icells .editplus { background: #68666a; }
  .icells .open, .icells .editplus { background-image: linear-gradient(#729ed0, #729ed0); background-size: 26px 2px; background-position: center bottom; background-repeat: no-repeat; }
  .itray { display: flex; align-items: center; padding-right: 16px; }
  .itray > :global(svg) { margin-right: 5px; }
  .ismall { display: flex; gap: 5px; margin: 0 6px 0 6px; }
  .clock { display: flex; flex-direction: column; align-items: center; justify-content: center; }
  .ic { gap: 0; margin: 0 11px 0 3px; }
  .nt { position: relative; }
  .nt b { position: absolute; border-radius: 50%; display: grid; place-items: center; font-weight: 600; line-height: 1; }
  .bi { width: 11px; height: 11px; left: 6px; top: 4px; font-size: 7px; color: #eee; background: #444; border: 1px solid #777; }
  .watermark { position: absolute; left: 489px; top: 20px; }
  .wm, .wms { font: bold 28px "DejaVu Sans", sans-serif; }
  .wm { fill: #fff; fill-opacity: .85; stroke: #ddd; stroke-width: .3px; }
  .wms { fill: #858585; fill-opacity: .8; }
  .chat { width: 308px; background: #fff; padding-top: 452px; }
  .banner { height: 24px; background: #f7f7fc; border-bottom: 1px solid #e8e8ee; display: flex; align-items: center; padding-left: 36px; gap: 5px; }
  .to { height: 45px; display: flex; align-items: center; padding-left: 16px; padding-bottom: 1px; }
  .pill { width: 84px; height: 22px; background: #f1f1f7; border-radius: 6px; display: flex; align-items: center; padding-left: 8px; gap: 7px; margin: 0 5px 0 9px; }
  .ci { display: flex; align-items: center; gap: 8px; margin-left: 18px; }
  .type { padding-left: 16px; margin-top: -6px; }
  .mtask { height: 39px; background: #101010; display: flex; border-top: 1px solid #333; }
  .start { width: 46px; display: grid; place-items: center; flex: none; }
  .search { width: 332px; background: #f2f2f2; border: 1px solid #bbb; display: flex; align-items: center; gap: 11px; padding-left: 11px; flex: none; }
  .mcells { display: flex; margin-left: -1px; }
  .mcells span { width: 47.3px; height: 38px; display: grid; place-items: center; flex: none; }
  .mcells .sticky, .mcells .chrome { background: linear-gradient(#d98ba0, #d98ba0) center bottom / 38px 2px no-repeat; }
  .mcells .zoom { background: linear-gradient(#d98ba0, #d98ba0) center bottom / 100% 2px no-repeat #333; }
  .mcells .dial { background: linear-gradient(#ee8223, #ee8223) center bottom / 100% 2px no-repeat #a65a18; width: 46px; }
  .mtray { display: flex; align-items: center; margin-left: 155px; gap: 9px; }
  .meng { display: grid; align-items: center; margin-left: 8px; }
  .mc { margin-left: 12px; gap: 0; }
  .mnt { margin: 10px 0 0 17px; width: 36px; border-right: 1px solid #444; }
  .bm { width: 16px; height: 16px; left: 6px; top: 7px; font-size: 12px; color: #eee; background: #333; border: 1px solid #777; }
  .controls { height: 52px; background: #f0f0f0; }
  .seek { height: 20px; display: flex; align-items: center; padding: 0 7px 0 9px; }
  .track { width: 1261px; height: 9px; margin: -2px 16px 0 17px; border-radius: 3px; background: linear-gradient(#b9b9b9, #d2d2d2); border-top: 1px solid #aaa; }
  .fill { width: 1218px; height: 8px; background: #267fd0; border-radius: 3px; }
  .buttons { height: 30px; display: flex; align-items: center; padding-left: 4px; gap: 14px; }
  .btn { width: 24px; height: 24px; border: 1px solid #adadad; background: #e2e2e2; display: grid; place-items: center; }
  .big { width: 30px; height: 30px; }
  .bg { display: flex; gap: 2px; }
  .volume { margin: 0 4px 0 auto; }
  .taskbar { height: 36px; display: flex; background: linear-gradient(90deg, #d2e4ee, #d8e7ee 35%, #d5e5ec 63%, #dce2e6 75%, #d0e2e9 85%, #cfdee7); }
  .b { width: 48px; padding-top: 3px; }
  .s2 { width: 344px; background: #fff; border-color: #ccc; border-bottom: 0; padding-top: 4px; }
  .lead { display: flex; }
  .lead span { width: 48px; display: grid; place-items: center; padding-top: 4px; }
  .bcells { display: flex; margin-left: 2.5px; }
  .bcells span { width: 49px; height: 36px; display: grid; place-items: center; padding-top: 4px; }
  .bcells .cone { background: #eef5f8; }
  .btray { display: flex; align-items: center; gap: 9px; margin-left: 111.5px; padding-top: 4px; }
  .lang { margin-left: 12px; padding-top: 2px; }
  .bc { margin-left: 13px; padding-top: 2px; }
  .bnt { margin: 11px 0 0 18px; width: 36px; border-right: 1px solid #9aabb5; }
  .bb { width: 17px; height: 17px; left: 7px; top: 7px; font-size: 13px; color: #111; background: #d6dadd; border: 1px solid #555; }
</style>
